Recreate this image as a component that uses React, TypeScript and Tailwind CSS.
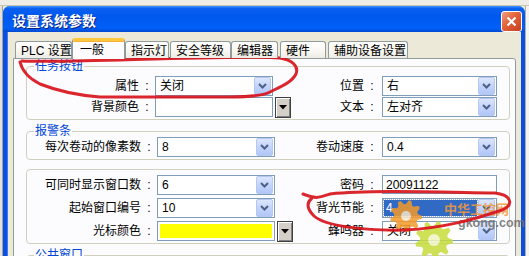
import React from "react";

const FONT = "font-['Liberation_Sans','Noto_Sans_CJK_SC',sans-serif]";

function DropBtn() {
  return (
    <div className="w-[17px] h-[18px] rounded-[2px] border border-[#b5c8f3] bg-[linear-gradient(180deg,#dce6fd_0%,#c3d3fb_50%,#b2c7f7_100%)] flex items-center justify-center">
      <svg width="9" height="6" viewBox="0 0 9 6">
        <path d="M1 1 L4.5 4.5 L8 1" fill="none" stroke="#4d6185" strokeWidth="2" />
      </svg>
    </div>
  );
}

function Select({ value, wide, hl }: { value: string; wide?: boolean; hl?: boolean }) {
  return (
    <div
      className={
        (wide ? "w-[115px]" : "w-[118px]") +
        " h-[20px] border border-[#7f9db9] bg-white flex items-center justify-between pl-[1px] pr-[1px]"
      }
    >
      {hl ? (
        <span className="h-[16px] w-[93px] bg-[#316ac5] text-white pl-[2px] flex items-center outline-1 outline-dotted outline-[#9cb4e0]">
          {value}
        </span>
      ) : (
        <span className="pl-[3px]">{value}</span>
      )}
      <DropBtn />
    </div>
  );
}

function ColorField({ color }: { color: string }) {
  return (
    <div className="w-[118px] h-[20px] border border-[#7f9db9] bg-white p-[2px]">
      <div className={"w-full h-full " + color}></div>
    </div>
  );
}

function ColorBtn() {
  return (
    <div className="w-[16px] h-[21px] border border-[#404040] bg-[#d4d0c8] shadow-[inset_1px_1px_0_#ffffff,inset_-1px_-1px_0_#808080] flex items-center justify-center">
      <svg width="8" height="5" viewBox="0 0 8 5">
        <path d="M0 0 L8 0 L4 4.5 Z" fill="#000" />
      </svg>
    </div>
  );
}

function TextBox({ value }: { value: string }) {
  return (
    <div className="w-[115px] h-[19px] border border-[#7f9db9] bg-white flex items-center pl-[3px]">
      {value}
    </div>
  );
}

function Row({
  label,
  left,
  btn,
  rlabel,
  right,
  wide,
}: {
  label: string;
  left: React.ReactNode;
  btn?: React.ReactNode;
  rlabel: string;
  right: React.ReactNode;
  wide?: boolean;
}) {
  return (
    <div className="flex items-start h-[21px]">
      <div className={(wide ? "w-[116px]" : "w-[114px]") + " h-[20px] flex items-center justify-end pr-[2px]"}>{label}</div>
      <div className="w-[12px] h-[20px] flex items-center justify-center">:</div>
      <div className="ml-[2px]">{left}</div>
      <div className="w-[18px] pl-[2px]">{btn}</div>
      <div className={(wide ? "w-[73px]" : "w-[75px]") + " h-[20px] flex items-center justify-end pr-[2px]"}>{rlabel}</div>
      <div className="w-[12px] h-[20px] flex items-center justify-center">:</div>
      <div className="ml-[4px]">{right}</div>
    </div>
  );
}

function Group({ title, children, cls }: { title?: string; children: React.ReactNode; cls: string }) {
  return (
    <div className={"relative border border-[#d0d0bf] rounded-[4px] " + cls}>
      {title && (
        <span className="absolute left-[7px] top-[-7px] bg-[#fcfcfe] px-[1px] text-[#0046d5] leading-[13px]">
          {title}
        </span>
      )}
      {children}
    </div>
  );
}

function gear(cx: number, cy: number, ro: number, ri: number, teeth: number) {
  const n = teeth * 4;
  const pts: string[] = [];
  for (let i = 0; i < n; i++) {
    const a = (i / n) * Math.PI * 2;
    const r = i % 4 < 2 ? ro : ri;
    pts.push(`${(cx + r * Math.cos(a)).toFixed(1)},${(cy + r * Math.sin(a)).toFixed(1)}`);
  }
  return pts.join(" ");
}

const tabs = [
  { t: "PLC 设置", w: "w-[57px] ml-[2px]" },
  { t: "一般", w: "w-[53px]", sel: true },
  { t: "指示灯", w: "w-[44px]" },
  { t: "安全等级", w: "w-[61px] ml-[1px]" },
  { t: "编辑器", w: "w-[47px]" },
  { t: "硬件", w: "w-[46px] ml-[2px]" },
  { t: "辅助设备设置", w: "w-[80px] ml-[2px]" },
];

export default function App() {
  return (
    <div className={"relative w-[529px] h-[256px] overflow-hidden bg-[#ece9d8] text-[12px] leading-none text-black " + FONT}>
      <div className="h-[6px] border-b border-[#c8c5b5] bg-[#efeee6]"></div>
      <div className="flex">
        <div className="w-[3px] h-[250px] bg-[#e4e2d6] border-r border-[#a0a0a0]"></div>
        <div className="w-[522px] h-[250px] flex flex-col bg-[#0b4fe0] rounded-t-[7px]">
          <div className="h-[28px] rounded-t-[7px] bg-[linear-gradient(180deg,#3d95ff_0%,#0a5fef_10%,#0058ee_40%,#0060f8_85%,#0049d0_100%)] flex items-start justify-between pl-[9px] pr-[3px]">
            <span className="mt-[7px] text-white font-bold text-[14px] leading-[14px] [text-shadow:1px_1px_0_#0a1f80] font-['Noto_Sans_CJK_SC',sans-serif]">
              设置系统参数
            </span>
            <div className="mt-[5px] w-[21px] h-[21px] rounded-[3px] border border-white bg-[linear-gradient(135deg,#f0a080_0%,#e2603a_45%,#c8401f_100%)] flex items-center justify-center">
              <svg width="11" height="11" viewBox="0 0 11 11">
                <path d="M1.5 1.5 L9.5 9.5 M9.5 1.5 L1.5 9.5" stroke="#fff" strokeWidth="2.2" />
              </svg>
            </div>
          </div>
          <div className="flex-1 mx-[4px] bg-[#ece9d8] pt-[6px] pl-[6px] pr-[5px] shadow-[inset_1px_0_0_#3d7bf0]">
            <div className="relative z-10 h-[21px] flex items-end">
              {tabs.map((tb) =>
                tb.sel ? (
                  <div
                    key={tb.t}
                    className={tb.w + " h-[21px] bg-[#fcfcfe] border-x border-[#919b9c] border-t-[3px] border-t-[#ffc83c] rounded-t-[3px] pl-[7px] pt-[3px] shadow-[inset_0_1px_0_#f7b13a]"}
                  >
                    {tb.t}
                  </div>
                ) : (
                  <div
                    key={tb.t}
                    className={tb.w + " mb-px h-[17px] border border-b-0 border-[#919b9c] rounded-t-[3px] bg-[linear-gradient(180deg,#ffffff_0%,#f7f6f1_60%,#ecebe5_100%)] pl-[5px] pt-[3px] whitespace-nowrap"}
                  >
                    {tb.t}
                  </div>
                )
              )}
            </div>
            <div className="-mt-px h-[200px] border border-[#919b9c] rounded-tr-[3px] bg-[#fcfcfe] pl-[12px] pr-[5px] pt-[7px]">
              <Group title="任务按钮" cls="pt-[9px] pb-[1px]">
                <Row
                  label="属性"
                  left={<Select value="关闭" />}
                  rlabel="位置"
                  right={<Select value="右" wide />}
                />
                <Row
                  label="背景颜色"
                  left={<ColorField color="bg-white" />}
                  btn={<ColorBtn />}
                  rlabel="文本"
                  right={<Select value="左对齐" wide />}
                />
              </Group>
              <Group title="报警条" cls="mt-[11px] pt-[5px] pb-[1px]">
                <Row
                  wide
                  label="每次卷动的像素数"
                  left={<Select value="8" />}
                  rlabel="卷动速度"
                  right={<Select value="0.4" wide />}
                />
              </Group>
              <Group cls="mt-[9px] pt-[5px] pb-[1px] flex flex-col gap-[2px]">
                <Row
                  wide
                  label="可同时显示窗口数"
                  left={<Select value="6" />}
                  rlabel="密码"
                  right={<TextBox value="20091122" />}
                />
                <Row
                  wide
                  label="起始窗口编号"
                  left={<Select value="10" />}
                  rlabel="背光节能"
                  right={<Select value="4" wide hl />}
                />
                <Row
                  wide
                  label="光标颜色"
                  left={<ColorField color="bg-[#ffff00]" />}
                  btn={<ColorBtn />}
                  rlabel="蜂鸣器"
                  right={<Select value="关闭" wide />}
                />
              </Group>
              <Group title="公共窗口" cls="mt-[11px] h-[20px]">
                <span></span>
              </Group>
            </div>
          </div>
        </div>
        <div className="w-[4px] h-[250px] bg-[#f4f3ee] border-l border-[#b0b0a8]"></div>
      </div>

      <svg className="absolute inset-0 pointer-events-none" width="529" height="256" viewBox="0 0 529 256">
        <g opacity="0.85">
          <polygon points={gear(406, 216, 16, 12, 9)} fill="#f39a2a" />
          <circle cx="406" cy="216" r="5" fill="#fbe6c8" />
          <polygon points={gear(434, 240, 19, 14, 9)} fill="#c6dc3a" />
          <circle cx="434" cy="240" r="6" fill="#eef5c0" />
        </g>
        <text x="444" y="214" fontSize="13" fontWeight="bold" fill="#f4993a" opacity="0.85" fontFamily="Noto Sans CJK SC, sans-serif">
          中华工控网
        </text>
        <text x="458" y="227" fontSize="12.5" fontWeight="bold" fill="#6f6f6f" opacity="0.85" fontFamily="Liberation Sans, sans-serif">
          gkong.com
        </text>
        <g fill="none" stroke="#d8141c" strokeWidth="3" strokeLinecap="round" strokeLinejoin="round" opacity="0.92">
          <path d="M20 62 C22 70 28 78 40 84 C55 90 75 95 100 97 L230 97 C250 97 262 96 270 92 C282 86 292 82 296 74 C299 66 292 60 280 58 C260 56 200 58 120 60 C80 61 40 62 22 61" />
          <path d="M303 194 C316 199 318 198 330 194 C370 190 430 192 495 193 C512 195 514 205 502 210 C475 219 445 228 405 230 C365 231 325 226 314 216 C307 209 306 203 312 198" />
        </g>
      </svg>
    </div>
  );
}
